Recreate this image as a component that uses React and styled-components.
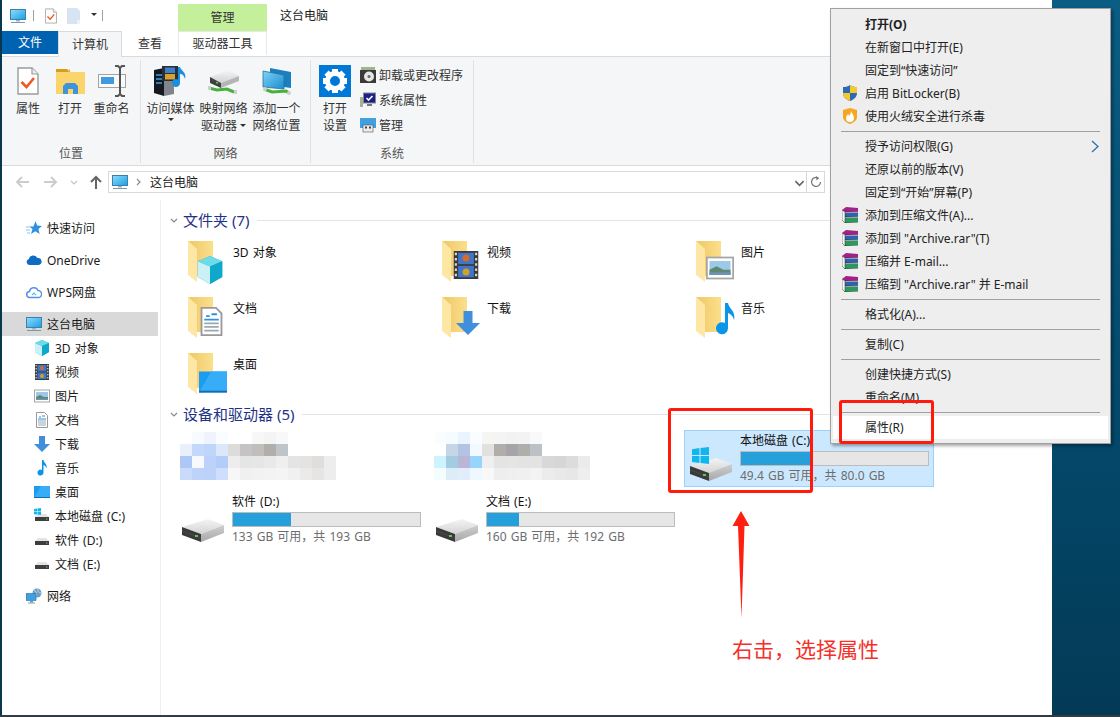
import React from 'react';
import styled, { createGlobalStyle } from 'styled-components';

const GlobalStyle = createGlobalStyle`
  html, body {
    margin: 0;
    padding: 0;
    overflow: hidden;
    background: #04405c;
  }
  * {
    box-sizing: border-box;
  }
`;

const Desktop = styled.div`
  position: relative;
  display: flex;
  flex-direction: column;
  width: 1120px;
  height: 717px;
  overflow: hidden;
  font-family: "Noto Sans", "Noto Sans CJK SC", sans-serif;
  font-size: 12px;
  word-spacing: 1px;
  color: #111;
  background: linear-gradient(180deg, #0b5d84 0%, #04486a 60%, #033a56 100%);
`;

const Workspace = styled.div`
  flex: 1;
  min-height: 0;
  padding-left: 2px;
  background: linear-gradient(90deg, #07384e 2px, transparent 2px);
`;

const Taskbar = styled.div`
  height: 2px;
  background: #333c42;
`;

const Window = styled.div`
  display: flex;
  flex-direction: column;
  width: 1050px;
  height: 100%;
  background: #fff;
`;

const TitleBar = styled.div`
  display: flex;
  align-items: flex-end;
  height: 31px;
`;

const QuickAccess = styled.div`
  display: flex;
  align-items: center;
  width: 176px;
  height: 31px;
  padding-left: 8px;
`;

const QatSep = styled.span`
  width: 1px;
  height: 11px;
  margin: 0 ${(p) => p.$right || 0}px 0 ${(p) => p.$left || 0}px;
  background: #a0a0a0;
`;

const QatGap = styled.span`
  width: ${(p) => p.$width}px;
`;

const ContextTab = styled.div`
  display: flex;
  align-items: center;
  justify-content: center;
  width: 89px;
  height: 27px;
  padding-bottom: 1px;
  background: #c4f09c;
  color: #333;
`;

const WindowTitle = styled.div`
  align-self: center;
  margin: -1px 0 0 13px;
  color: #1a1a1a;
`;

const TabRow = styled.div`
  display: flex;
  height: 26px;
  border-bottom: 1px solid #dadbdc;
`;

const FileTab = styled.div`
  display: flex;
  align-items: center;
  justify-content: center;
  width: 56px;
  height: 23px;
  padding-bottom: 1px;
  background: #0063b1;
  color: #fff;
`;

const Tab = styled.div`
  display: flex;
  align-items: center;
  justify-content: center;
  width: ${(p) => p.$width}px;
  height: ${(p) => (p.$active ? 27 : 24)}px;
  margin-bottom: ${(p) => (p.$active ? -1 : 0)}px;
  padding-bottom: ${(p) => (p.$active ? 3 : 1)}px;
  background: ${(p) => (p.$active ? '#f5f6f7' : '#fff')};
  color: #333;
  border-style: solid;
  border-color: #dadbdc;
  border-width: ${(p) => (p.$active ? '1px 1px 0' : 0)};
  ${(p) => p.$context && 'border-width: 1px 1px 0; border-color: #e8e8e8;'}
`;

const Ribbon = styled.div`
  display: flex;
  flex: none;
  height: 109px;
  padding: 3px 0 2px;
  background: #f5f6f7;
  border-bottom: 1px solid #dadbdc;
`;

const RibbonGroup = styled.div`
  display: flex;
  flex-direction: column;
  width: ${(p) => p.$width}px;
  border-right: 1px solid #e1e2e3;
`;

const GroupBody = styled.div`
  flex: 1;
  display: flex;
  padding-left: ${(p) => p.$pad || 0}px;
`;

const GroupLabel = styled.div`
  height: 18px;
  line-height: 18px;
  text-align: center;
  color: #555;
`;

const RibbonButton = styled.div`
  display: flex;
  flex-direction: column;
  align-items: center;
  width: ${(p) => p.$width}px;
  padding-top: 4px;
  color: #333;
  text-align: center;
  line-height: 17px;
  white-space: nowrap;
`;

const ButtonIcon = styled.div`
  display: flex;
  align-items: center;
  justify-content: center;
  height: 34px;
  margin-bottom: 2px;
`;

const Caret = styled.span`
  display: inline-block;
  width: 0;
  height: 0;
  margin: ${(p) => (p.$block ? '1px 0 0' : '0 0 2px 3px')};
  vertical-align: middle;
  border-left: 3px solid transparent;
  border-right: 3px solid transparent;
  border-top: 3px solid #333;
`;

const SmallColumn = styled.div`
  display: flex;
  flex-direction: column;
  gap: 3px;
  padding: 4px 0 0 1px;
`;

const SmallButton = styled.div`
  display: flex;
  align-items: center;
  gap: 3px;
  height: 22px;
  color: #333;
`;

const AddressRow = styled.div`
  display: flex;
  align-items: center;
  flex: none;
  height: 34px;
  padding-bottom: 2px;
`;

const NavIcon = styled.span`
  display: flex;
  align-items: center;
  justify-content: center;
  width: ${(p) => p.$width}px;
`;

const AddressBox = styled.div`
  display: flex;
  align-items: center;
  width: 717px;
  height: 22px;
  margin-left: 4px;
  padding-left: 3px;
  border: 1px solid #d9d9d9;
  color: #1a1a1a;
`;

const Crumb = styled.span`
  flex: 1;
  margin-left: 2px;
`;

const RefreshCell = styled.span`
  display: flex;
  align-items: center;
  justify-content: center;
  width: 18px;
  height: 100%;
  border-left: 1px solid #d9d9d9;
`;

const Main = styled.div`
  flex: 1;
  display: flex;
  min-height: 0;
`;

const Sidebar = styled.nav`
  display: flex;
  flex-direction: column;
  gap: 8px;
  width: 159px;
  padding: 16px 2px 0 0;
  border-right: 1px solid #efefef;
`;

const NavGroup = styled.div`
  display: flex;
  flex-direction: column;
`;

const NavItem = styled.div`
  display: flex;
  align-items: center;
  gap: 5px;
  height: 24px;
  padding-left: ${(p) => (p.$child ? 32 : 24)}px;
  background: ${(p) => (p.$selected ? '#d9d9d9' : 'transparent')};
  color: #1a1a1a;
`;

const Content = styled.div`
  flex: 1;
  display: flex;
  flex-direction: column;
  gap: 2px;
  padding: 8px 0 0 9px;
`;

const Section = styled.section`
  display: flex;
  flex-direction: column;
  gap: 4px;
`;

const SectionHeader = styled.div`
  display: flex;
  align-items: center;
  gap: 5px;
  height: 24px;
  color: #1e3287;
  font-size: 15px;
  word-spacing: 0;
`;

const SectionTitle = styled.span`
  margin-top: -2px;
`;

const SectionRule = styled.span`
  flex: 1;
  height: 1px;
  margin-left: 3px;
  background: #e4e4e4;
`;

const TileGrid = styled.div`
  display: grid;
  grid-template-columns: repeat(3, 250px);
  gap: 4px;
  margin-left: 6px;
`;

const FolderTile = styled.div`
  display: flex;
  height: 52px;
  padding: 5px 0 0 12px;
  color: #111;
`;

const TileName = styled.div`
  margin: 3px 0 0 7px;
  line-height: 17px;
`;

const FolderFrame = styled.div`
  position: relative;
  width: 38px;
  height: 42px;
  flex: none;
`;

const FolderBadge = styled.div`
  position: absolute;
  right: ${(p) => p.$right ?? 0}px;
  bottom: ${(p) => p.$bottom ?? 0}px;
  display: flex;
`;

const DriveTile = styled.div`
  display: flex;
  height: 57px;
  padding: 1px 0 0 5px;
  background: ${(p) => (p.$selected ? '#cce8ff' : 'transparent')};
  border: 1px solid ${(p) => (p.$selected ? '#99d1ff' : 'transparent')};
`;

const DriveIconBox = styled.div`
  position: relative;
  width: 50px;
  height: 100%;
  flex: none;
`;

const DriveArt = styled.div`
  position: absolute;
  left: 0;
  top: 26px;
  display: flex;
`;

const WinBadge = styled.div`
  position: absolute;
  left: 2px;
  top: 15px;
  display: flex;
`;

const DriveInfo = styled.div`
  display: flex;
  flex-direction: column;
  width: 189px;
`;

const DriveName = styled.div`
  height: 18px;
  line-height: 18px;
  color: #111;
`;

const Bar = styled.div`
  height: 15px;
  margin-top: 1px;
  background: #e6e6e6;
  border: 1px solid #bcbcbc;
`;

const BarFill = styled.div`
  height: 100%;
  background: #26a0da;
`;

const DriveFree = styled.div`
  margin-top: 1px;
  line-height: 18px;
  color: #6d6d6d;
`;

const MosaicTile = styled.div`
  height: 57px;
  display: flex;
  align-items: flex-start;
  padding: 2px 0 0 4px;
`;

const SmallDriveFrame = styled.span`
  position: relative;
  display: flex;
`;

const SmallWin = styled.span`
  position: absolute;
  left: 0;
  top: 0;
  display: flex;
`;

const Menu = styled.div`
  position: absolute;
  left: 830px;
  top: 8px;
  width: 281px;
  padding: 4px 2px;
  background: #eeeeee;
  border: 1px solid #a0a0a0;
  box-shadow: 2px 2px 3px rgba(0, 0, 0, 0.35);
  color: #222;
  word-spacing: 0;
`;

const MenuItem = styled.div`
  position: relative;
  display: flex;
  align-items: center;
  height: 23px;
  padding: 0 0 2px 32px;
  background: ${(p) => (p.$hover ? '#fff' : 'transparent')};
  font-weight: ${(p) => (p.$bold ? 700 : 400)};
  white-space: pre;
`;

const MenuIcon = styled.span`
  position: absolute;
  left: 9px;
  top: 3px;
  display: flex;
`;

const MenuArrow = styled.span`
  position: absolute;
  right: 9px;
  top: 5px;
  display: flex;
`;

const MenuSep = styled.div`
  height: 1px;
  margin: 3px 8px;
  background: #a0a0a0;
`;

const RedBox = styled.div`
  position: absolute;
  left: ${(p) => p.$x}px;
  top: ${(p) => p.$y}px;
  width: ${(p) => p.$w}px;
  height: ${(p) => p.$h}px;
  border: 3px solid #ff1a0c;
  border-radius: 3px;
`;

const ArrowMark = styled.svg`
  position: absolute;
  left: 730px;
  top: 510px;
`;

const Caption = styled.div`
  position: absolute;
  left: 732px;
  top: 633px;
  font-family: "Noto Sans CJK SC", sans-serif;
  font-size: 21px;
  line-height: 30px;
  color: #f5302a;
`;

// drawings

const MonitorIcon = ({ size = 16 }) => (
  <svg width={size} height={size} viewBox="0 0 16 16">
    <defs>
      <linearGradient id="scr" x1="0" y1="0" x2="1" y2="1">
        <stop offset="0" stopColor="#8fdcfb" />
        <stop offset="1" stopColor="#1a9fe8" />
      </linearGradient>
    </defs>
    <rect x="0.5" y="1.5" width="15" height="10" fill="url(#scr)" stroke="#3f7fa8" />
    <rect x="6" y="12" width="4" height="1.5" fill="#9ab4c4" />
    <rect x="1" y="14" width="14" height="1" fill="#7c99ab" />
  </svg>
);

const CheckDoc = ({ width = 12, height = 16 }) => (
  <svg width={width} height={height} viewBox="0 0 22 28">
    <path d="M1 1h14l6 6v20H1z" fill="#fff" stroke="#9a9a9a" strokeWidth="1.4" />
    <path d="M15 1v6h6" fill="#eee" stroke="#9a9a9a" strokeWidth="1.2" />
    <path d="M4.5 15l5 5L17 11" fill="none" stroke="#ef5a24" strokeWidth="2.6" />
  </svg>
);

const BlankDoc = () => (
  <svg width="13" height="16" viewBox="0 0 13 16">
    <path d="M0 0h10l3 3v13H0z" fill="#d8e4f4" />
    <path d="M10 12h3v4h-3z" fill="#eef3fa" />
  </svg>
);

const OpenFolder = () => (
  <svg width="29" height="25" viewBox="0 0 29 25">
    <path d="M0 0h11l3 3H0z" fill="#d69c1e" />
    <path d="M0 3h29v22H0z" fill="#fbd56b" />
    <path d="M0 3h11l3-3v3z" fill="#e8ab2e" />
    <path d="M7 25v-8l3-3h9l3 3v8h-5v-5h-5v5z" fill="#3f93dc" />
  </svg>
);

const RenameIcon = () => (
  <svg width="28" height="32" viewBox="0 0 28 32">
    <rect x="0.5" y="9.500" width="27" height="13" fill="#fafafa" stroke="#a3a3a3" />
    <rect x="3" y="12" width="13" height="7" fill="#3f9ae0" />
    <path d="M17 1h3l2 2 2-2h3M22 3v26M17 31h3l2-2 2 2h3" fill="none" stroke="#555" strokeWidth="2" />
  </svg>
);

const MediaIcon = () => (
  <svg width="33" height="30" viewBox="0 0 33 30">
    <path d="M0 4l10-2v28L0 27z" fill="#14181f" />
    <path d="M10 2l10 3v23l-10 2z" fill="#80858c" />
    <path d="M2 9h6M2 13h6M2 17h6" stroke="#3aa0e8" strokeWidth="1.5" />
    <rect x="8" y="0" width="16" height="15" fill="#2a2f38" />
    <rect x="11" y="1.500" width="10" height="5.500" fill="#3d80c8" />
    <rect x="11" y="8" width="10" height="5.500" fill="#d8a030" />
    <path d="M26 1v16a4 4 0 1 1-2-3.400V1zM26 1c1 4 7 5 5 12-1-4-3-5-5-5z" fill="#1a8fe0" />
  </svg>
);

const NetDrive = () => (
  <svg width="32" height="26" viewBox="0 0 32 26">
    <defs>
      <linearGradient id="ndt" x1="0" y1="0" x2="0" y2="1">
        <stop offset="0" stopColor="#f6f6f6" />
        <stop offset="1" stopColor="#d2d2d2" />
      </linearGradient>
    </defs>
    <path d="M2 9L21 2l10 6-18 7z" fill="url(#ndt)" />
    <path d="M13 15l18-7v5l-18 7z" fill="#b5b5b5" />
    <path d="M2 9l11 6v5L2 15z" fill="#404040" />
    <rect x="8" y="14" width="2" height="1.500" fill="#5ecb47" />
    <path d="M1 20l8 2 10-1 7 3" fill="none" stroke="#46b23c" strokeWidth="3" />
    <rect x="0" y="18" width="3" height="4" fill="#cfcfcf" />
    <rect x="26" y="22" width="3" height="4" fill="#cfcfcf" />
  </svg>
);

const NetLocation = () => (
  <svg width="30" height="28" viewBox="0 0 30 28">
    <defs>
      <linearGradient id="nl" x1="0" y1="0" x2="1" y2="1">
        <stop offset="0" stopColor="#7fd3f7" />
        <stop offset="1" stopColor="#1a8ccf" />
      </linearGradient>
    </defs>
    <path d="M8 1l21 4v16l-21-3z" fill="#1a7fbd" />
    <path d="M1 4l21 4v14L1 20z" fill="url(#nl)" stroke="#2a6f9c" strokeWidth="0.800" />
    <path d="M2 22l8 3 14-1 3 2" fill="none" stroke="#46b23c" strokeWidth="3" />
    <circle cx="3" cy="22" r="2" fill="#d0d0d0" />
    <circle cx="27" cy="26" r="2" fill="#d0d0d0" />
  </svg>
);

const GearIcon = () => (
  <svg width="32" height="32" viewBox="0 0 32 32">
    <rect width="32" height="32" fill="#0078d7" />
    <g fill="#fff">
      {[0, 45, 90, 135, 180, 225, 270, 315].map((a) => (
        <rect key={a} x="13" y="4" width="6" height="6" transform={`rotate(${a} 16 16)`} />
      ))}
    </g>
    <circle cx="16" cy="16" r="7.500" fill="none" stroke="#fff" strokeWidth="5" />
  </svg>
);

const UninstallIcon = () => (
  <svg width="16" height="16" viewBox="0 0 16 16">
    <rect x="1" y="0" width="14" height="4" fill="#9fb58c" />
    <rect x="0" y="3" width="16" height="13" fill="#3a3a3a" />
    <circle cx="9" cy="9.500" r="5" fill="#e6e6e6" />
    <circle cx="9" cy="9.500" r="1.500" fill="#666" />
  </svg>
);

const SysPropsIcon = () => (
  <svg width="16" height="16" viewBox="0 0 16 16">
    <rect x="0" y="5" width="3" height="10" fill="#a8b09a" />
    <rect x="3.500" y="1" width="12" height="10" fill="#1c1e8c" stroke="#888" />
    <path d="M6.500 6l2 2 4-4" fill="none" stroke="#fff" strokeWidth="1.600" />
    <rect x="7" y="12" width="5" height="2" fill="#777" />
  </svg>
);

const ManageIcon = () => (
  <svg width="16" height="16" viewBox="0 0 16 16">
    <rect x="0" y="1" width="16" height="10" fill="#3f9fe0" />
    <rect x="3" y="8" width="10" height="7" fill="#ececec" stroke="#555" strokeWidth="0.600" />
    <rect x="5" y="9.500" width="2" height="2" fill="#444" />
    <rect x="9" y="9.500" width="2" height="2" fill="#444" />
  </svg>
);

const Chevron = ({ dir = 'right', color = '#8a8a8a', size = 8 }) => {
  const d = dir === 'down' ? 'M1 3l3 3 3-3' : 'M3 1l3 3-3 3';
  return (
    <svg width={size} height={size} viewBox="0 0 8 8">
      <path d={d} fill="none" stroke={color} strokeWidth="1.200" />
    </svg>
  );
};

const NavArrow = ({ left, up, color }) => {
  const d = up ? 'M8 15V3M3 8l5-5 5 5' : left ? 'M15 8H3M8 3L3 8l5 5' : 'M1 8h12M8 3l5 5-5 5';
  return (
    <svg width="16" height="16" viewBox="0 0 16 16">
      <path d={d} fill="none" stroke={color} strokeWidth="2" />
    </svg>
  );
};

const RefreshIcon = () => (
  <svg width="12" height="12" viewBox="0 0 12 12">
    <path d="M8.500 2.200A4.500 4.500 0 1 0 10.500 6" fill="none" stroke="#777" strokeWidth="1.300" />
    <path d="M6 0l3 2.200L6.500 4.500z" fill="#777" />
  </svg>
);

const StarIcon = () => (
  <svg width="16" height="16" viewBox="0 0 16 16">
    <path d="M9.500 1l1.600 4.400L16 6l-3.600 3 1.200 5-4.300-2.800L5 14l1.500-5L3 6.500h4.500z" fill="#2f8fe0" />
    <path d="M0 7h3M0 10h4M1 13h3" stroke="#8cc4ee" strokeWidth="1" />
  </svg>
);

const CloudSolid = () => (
  <svg width="16" height="16" viewBox="0 0 16 16">
    <path d="M3.500 13a3 3 0 0 1-.6-5.900A4.500 4.500 0 0 1 11.400 6a3.500 3.500 0 0 1 1.200 7z" fill="#0f6cc4" />
  </svg>
);

const CloudLine = () => (
  <svg width="16" height="16" viewBox="0 0 16 16">
    <path d="M4 13.500a3 3 0 0 1-.5-6A4.400 4.400 0 0 1 12 6.600a3.400 3.400 0 0 1 .3 6.900z" fill="none" stroke="#4f8ff0" strokeWidth="1.500" />
    <path d="M6 11l2-2 2 2" fill="none" stroke="#6fb6e8" strokeWidth="1.200" />
  </svg>
);

const NetworkIcon = () => (
  <svg width="16" height="16" viewBox="0 0 16 16">
    <circle cx="11" cy="5" r="4.500" fill="#6a9cc4" />
    <path d="M8 2c2 1 3 3 2 6M12 1c-1 2 1 4 3 4" fill="none" stroke="#dbe8f2" strokeWidth="0.800" />
    <rect x="0" y="5.500" width="10" height="7" fill="#3f9fe0" stroke="#2a6f9c" strokeWidth="0.600" />
    <rect x="4" y="13" width="3" height="1.500" fill="#7c99ab" />
    <rect x="2" y="14.500" width="7" height="1" fill="#7c99ab" />
  </svg>
);

const CubeIcon = ({ size = 16 }) => (
  <svg width={size} height={size} viewBox="0 0 16 16">
    <path d="M8 0l7 3v9l-7 4-7-4V3z" fill="#12b3d6" />
    <path d="M1 3l7 3v10l-7-4z" fill="#c9f1f6" />
    <path d="M8 0l7 3-7 3-7-3z" fill="#6fdbe8" />
    <path d="M8 6l7-3v9l-7 4z" fill="#0fa8ca" />
  </svg>
);

const FilmIcon = ({ size = 16 }) => (
  <svg width={size} height={size} viewBox="0 0 16 16">
    <rect x="1" y="0" width="14" height="16" fill="#3a3a3a" />
    <rect x="3.500" y="1" width="9" height="6.500" fill="#3f76c9" />
    <rect x="3.500" y="8.500" width="9" height="6.500" fill="#3f76c9" />
    <circle cx="8" cy="4" r="2" fill="#d66a2a" />
    <circle cx="8" cy="12" r="2" fill="#d0a02a" />
    {[1, 4, 7, 10, 13].map((y) => (
      <g key={y}>
        <rect x="1.600" y={y} width="1.200" height="1.400" fill="#ddd" />
        <rect x="13.200" y={y} width="1.200" height="1.400" fill="#ddd" />
      </g>
    ))}
  </svg>
);

const PictureIcon = ({ size = 16 }) => (
  <svg width={size} height={size} viewBox="0 0 16 16">
    <rect x="0.500" y="2" width="15" height="12" fill="#fff" stroke="#a5a5a5" />
    <rect x="2" y="4" width="12" height="8" fill="#9cc8ea" />
    <path d="M2 9l4-2 4 2 4 0v3H2z" fill="#5e8870" />
    <rect x="2" y="10.500" width="12" height="1.500" fill="#6f93b4" />
  </svg>
);

const DocIcon = ({ size = 16 }) => (
  <svg width={size} height={size} viewBox="0 0 16 16">
    <path d="M2.500 0.500h8l3 3v12h-11z" fill="#fff" stroke="#999" />
    <path d="M5 5h2M8 4h3M4 7h8" stroke="#2f8fe0" strokeWidth="1" />
    <path d="M4 9h8M4 11h8M4 13h8" stroke="#9aa8b0" strokeWidth="1" />
  </svg>
);

const DownArrow = ({ size = 16 }) => (
  <svg width={size} height={size} viewBox="0 0 16 16">
    <path d="M5 0h6v8h5l-8 8-8-8h5z" fill="#3f8fdc" />
  </svg>
);

const NoteIcon = ({ size = 16 }) => (
  <svg width={size} height={size} viewBox="0 0 16 16">
    <path d="M8 0h1.500c.5 3 4 4 3 8.500-.5-2-1.500-3-3-3.500v7.500A3 3 0 1 1 8 10z" fill="#0a96e6" />
  </svg>
);

const ScreenIcon = ({ size = 16 }) => (
  <svg width={size} height={size} viewBox="0 0 16 16">
    <rect x="0" y="2" width="16" height="12" fill="#1a9cf2" />
    <path d="M0 14l7-12h9v11z" fill="#37adf8" />
    <rect x="0" y="13" width="16" height="1" fill="#0f6db0" />
  </svg>
);

const FolderArt = () => (
  <svg width="26" height="41" viewBox="0 0 26 41">
    <defs>
      <linearGradient id="fb" x1="0" y1="0" x2="1" y2="0">
        <stop offset="0" stopColor="#efc766" />
        <stop offset="1" stopColor="#fbdf8b" />
      </linearGradient>
    </defs>
    <path d="M0 0h25v35H8V8z" fill="url(#fb)" />
    <path d="M0 0l9 8v33l-9-7z" fill="#fee7a4" />
  </svg>
);

const WinLogo = ({ size = 6 }) => (
  <svg width={size} height={size} viewBox="0 0 16 16">
    <path d="M0 2l7-1v6.500H0zM8 1l8-1v7.500H8zM0 8.500h7V15l-7-1zM8 8.500h8V16l-8-1z" fill="#12b6ee" />
  </svg>
);

const DriveSmall = ({ system }) => (
  <SmallDriveFrame>
    <svg width="16" height="16" viewBox="0 0 16 16">
      <path d="M1 9l3-3h8l3 3z" fill="#e4e4e4" />
      <rect x="1" y="9" width="14" height="4" fill="#3e3e3e" />
      <rect x="12" y="10.500" width="1.500" height="1" fill="#5ecb47" />
    </svg>
    {system && (
      <SmallWin>
        <WinLogo size={7} />
      </SmallWin>
    )}
  </SmallDriveFrame>
);

const DriveBig = () => (
  <svg width="43" height="24" viewBox="0 0 43 24">
    <defs>
      <linearGradient id="dt" x1="0" y1="0" x2="0" y2="1">
        <stop offset="0" stopColor="#f4f4f4" />
        <stop offset="1" stopColor="#d4d4d4" />
      </linearGradient>
      <linearGradient id="ds" x1="0" y1="0" x2="0" y2="1">
        <stop offset="0" stopColor="#cfcfcf" />
        <stop offset="1" stopColor="#a8a8a8" />
      </linearGradient>
    </defs>
    <path d="M0 8L26 0l16 6-23 9z" fill="url(#dt)" />
    <path d="M19 15l23-9v8l-23 9z" fill="url(#ds)" />
    <path d="M0 8l19 7v8L0 16z" fill="#3a3a3a" />
    <path d="M0 12l19 7" stroke="#555" strokeWidth="0.600" />
    <rect x="13" y="16" width="3" height="2" fill="#5ecb47" />
  </svg>
);

const RarIcon = () => (
  <svg width="16" height="16" viewBox="0 0 16 16">
    <path d="M0 3l4-3 12 1v3.500L3 5z" fill="#a3208a" />
    <path d="M1 7l2-1h13v3.500L3 10z" fill="#2a62b8" />
    <path d="M1 12l2-1h13v4L3 16z" fill="#2a9a5c" />
    <path d="M0 3l3 2v11l-3-3z" fill="#f4f4f4" stroke="#333" strokeWidth="0.500" />
    <path d="M3 5h13M3 10h13M3 16h13" stroke="#111" strokeWidth="0.700" />
  </svg>
);

const UacShield = () => (
  <svg width="16" height="16" viewBox="0 0 16 16">
    <path d="M8 0c2 1.500 4 2 7 2v6c0 4-3 6.500-7 8-4-1.500-7-4-7-8V2c3 0 5-.5 7-2z" fill="#2d6ab5" />
    <path d="M8 0c2 1.500 4 2 7 2v6H8zM8 8H1c0 4 3 6.500 7 8z" fill="#f5c92e" />
  </svg>
);

const FireShield = () => (
  <svg width="16" height="16" viewBox="0 0 16 16">
    <path d="M8 0l7 2v7c0 3-3 5.500-7 7-4-1.500-7-4-7-7V2z" fill="#f6a623" />
    <path d="M9 3c1 3 3 4 3 7a4 4 0 0 1-8 0c0-2 1.500-2.500 2-4 1 1 1 1.500 1.500 2C8 6.500 9 5 9 3z" fill="#fff" />
  </svg>
);

const mosaicA = [
  ['#fff', '#f7faff', '#eef3fe', '#fbfcff', '#fff', '#fff', '#f7f7f7', '#f3f4f3', '#f8f8f8', '#fff', '#fff', '#fff', '#fff'],
  ['#e8effd', '#c4d8fb', '#c0d5fa', '#dce7fc', '#dddcd9', '#c4c4c6', '#c2bebc', '#b0afab', '#bfc4c8', '#fff', '#fff', '#fff', '#fff'],
  ['#adc7f7', '#f6faff', '#bcd2fa', '#b4ccf8', '#eeeded', '#e4e5e5', '#e7e6e6', '#e9e9e9', '#efefef', '#e3e4e6', '#e5e3e1', '#dfdedd', '#eceded'],
  ['#c9dafb', '#bdd3fa', '#bcd2f9', '#cfdefc', '#f7f7f7', '#f0f0f0', '#f2f2f2', '#f3f3f3', '#f4f4f4', '#f0f0f0', '#ebeae8', '#e5e5e3', '#ededed'],
];

const mosaicB = [
  ['#fafdfe', '#f5fbfe', '#eaf4ff', '#f9fdff', '#f5f5f3', '#f3f4f3', '#f1f2f1', '#f3f3f3', '#f9f9f9', '#fff', '#fff', '#fff', '#fff'],
  ['#fff', '#c5d7e6', '#b2c4e2', '#f2f9ff', '#e2e1de', '#b0adab', '#a5a5a7', '#afaeaa', '#bcc1c6', '#fff', '#fff', '#fff', '#fff'],
  ['#cdf3ff', '#a3cbe2', '#bbb6d6', '#97d5ff', '#efefef', '#e4e4e4', '#e5e5e5', '#e3e3e3', '#e3e3e1', '#d8d8d8', '#d6d6d6', '#dcdcdc', '#ebebeb'],
  ['#f5fcfe', '#dcedf7', '#dfeefa', '#eff8ff', '#f8f8f8', '#eeeeee', '#efefef', '#f0f0f0', '#f3f3f3', '#ececec', '#e9e9e9', '#e7e7e7', '#eeeeee'],
];

const Mosaic = ({ cells }) => (
  <svg width="156" height="48" viewBox="0 0 156 48" shapeRendering="crispEdges">
    {cells.map((row, r) =>
      row.map((c, i) => <rect key={`${r}-${i}`} x={i * 12} y={r * 12} width="12" height="12" fill={c} />)
    )}
  </svg>
);

const folders = [
  { name: '3D 对象', Badge: CubeIcon, size: 28, right: 2, bottom: -1 },
  { name: '视频', Badge: FilmIcon, size: 28, right: 0, bottom: 4 },
  { name: '图片', Badge: PictureIcon, size: 28, right: 0, bottom: 1 },
  { name: '文档', Badge: DocIcon, size: 29, right: 0, bottom: 3 },
  { name: '下载', Badge: DownArrow, size: 24, right: 0, bottom: 4 },
  { name: '音乐', Badge: NoteIcon, size: 32, right: -7, bottom: 4 },
  { name: '桌面', Badge: ScreenIcon, size: 28, right: -1, bottom: -1 },
];

const FolderItem = ({ name, Badge, size, right, bottom }) => (
  <FolderTile>
    <FolderFrame>
      <FolderArt />
      <FolderBadge $right={right} $bottom={bottom}>
        <Badge size={size} />
      </FolderBadge>
    </FolderFrame>
    <TileName>{name}</TileName>
  </FolderTile>
);

const Drive = ({ name, free, percent, selected }) => (
  <DriveTile $selected={selected}>
    <DriveIconBox>
      <DriveArt>
        <DriveBig />
      </DriveArt>
      {selected && (
        <WinBadge>
          <WinLogo size={17} />
        </WinBadge>
      )}
    </DriveIconBox>
    <DriveInfo>
      <DriveName>{name}</DriveName>
      <Bar>
        <BarFill style={{ width: `${percent}%` }} />
      </Bar>
      <DriveFree>{free}</DriveFree>
    </DriveInfo>
  </DriveTile>
);

const menuTop = [
  { label: '打开(O)', bold: true },
  { label: '在新窗口中打开(E)' },
  { label: '固定到“快速访问”' },
  { label: '启用 BitLocker(B)', icon: <UacShield /> },
  { label: '使用火绒安全进行杀毒', icon: <FireShield /> },
];

const menuMiddle = [
  { label: '授予访问权限(G)', sub: true },
  { label: '还原以前的版本(V)' },
  { label: '固定到“开始”屏幕(P)' },
  { label: '添加到压缩文件(A)...', icon: <RarIcon /> },
  { label: '添加到 "Archive.rar"(T)', icon: <RarIcon /> },
  { label: '压缩并 E-mail...', icon: <RarIcon /> },
  { label: '压缩到 "Archive.rar" 并 E-mail', icon: <RarIcon /> },
];

const MenuRow = ({ label, bold, icon, sub, hover }) => (
  <MenuItem $bold={bold} $hover={hover}>
    {icon && <MenuIcon>{icon}</MenuIcon>}
    {label}
    {sub && (
      <MenuArrow>
        <svg width="8" height="13" viewBox="0 0 8 13">
          <path d="M1 1l6 5.500-6 5.500" fill="none" stroke="#2a6aa8" strokeWidth="1.200" />
        </svg>
      </MenuArrow>
    )}
  </MenuItem>
);

const App = () => (
  <Desktop>
    <GlobalStyle />
    <Workspace>
      <Window>
        <TitleBar>
          <QuickAccess>
            <MonitorIcon />
            <QatSep $left={7} $right={11} />
            <CheckDoc />
            <QatGap $width={10} />
            <BlankDoc />
            <QatGap $width={8} />
            <Caret />
            <QatSep $left={5} />
          </QuickAccess>
          <ContextTab>管理</ContextTab>
          <WindowTitle>这台电脑</WindowTitle>
        </TitleBar>
        <TabRow>
          <FileTab>文件</FileTab>
          <Tab $width={64} $active>计算机</Tab>
          <Tab $width={56}>查看</Tab>
          <Tab $width={89} $context>驱动器工具</Tab>
        </TabRow>
        <Ribbon>
          <RibbonGroup $width={139}>
            <GroupBody $pad={5}>
              <RibbonButton $width={42}>
                <ButtonIcon><CheckDoc width={22} height={28} /></ButtonIcon>
                属性
              </RibbonButton>
              <RibbonButton $width={42}>
                <ButtonIcon><OpenFolder /></ButtonIcon>
                打开
              </RibbonButton>
              <RibbonButton $width={41}>
                <ButtonIcon><RenameIcon /></ButtonIcon>
                重命名
              </RibbonButton>
            </GroupBody>
            <GroupLabel>位置</GroupLabel>
          </RibbonGroup>
          <RibbonGroup $width={170}>
            <GroupBody $pad={3}>
              <RibbonButton $width={53}>
                <ButtonIcon><MediaIcon /></ButtonIcon>
                访问媒体
                <Caret $block />
              </RibbonButton>
              <RibbonButton $width={53}>
                <ButtonIcon><NetDrive /></ButtonIcon>
                映射网络
                <span>驱动器<Caret /></span>
              </RibbonButton>
              <RibbonButton $width={53}>
                <ButtonIcon><NetLocation /></ButtonIcon>
                添加一个
                <span>网络位置</span>
              </RibbonButton>
            </GroupBody>
            <GroupLabel>网络</GroupLabel>
          </RibbonGroup>
          <RibbonGroup $width={163}>
            <GroupBody>
              <RibbonButton $width={48}>
                <ButtonIcon><GearIcon /></ButtonIcon>
                打开
                <span>设置</span>
              </RibbonButton>
              <SmallColumn>
                <SmallButton><UninstallIcon />卸载或更改程序</SmallButton>
                <SmallButton><SysPropsIcon />系统属性</SmallButton>
                <SmallButton><ManageIcon />管理</SmallButton>
              </SmallColumn>
            </GroupBody>
            <GroupLabel>系统</GroupLabel>
          </RibbonGroup>
        </Ribbon>
        <AddressRow>
          <NavIcon $width={39}><NavArrow left color="#cccccc" /></NavIcon>
          <NavIcon $width={19}><NavArrow color="#cccccc" /></NavIcon>
          <NavIcon $width={27}><Chevron dir="down" color="#c4c4c4" /></NavIcon>
          <NavIcon $width={17}><NavArrow up color="#666666" /></NavIcon>
          <AddressBox>
            <MonitorIcon />
            <NavIcon $width={20}><Chevron /></NavIcon>
            <Crumb>这台电脑</Crumb>
            <NavIcon $width={14}><Chevron dir="down" color="#666" size={11} /></NavIcon>
            <RefreshCell><RefreshIcon /></RefreshCell>
          </AddressBox>
        </AddressRow>
        <Main>
          <Sidebar>
            <NavGroup>
              <NavItem><StarIcon />快速访问</NavItem>
            </NavGroup>
            <NavGroup>
              <NavItem><CloudSolid />OneDrive</NavItem>
            </NavGroup>
            <NavGroup>
              <NavItem><CloudLine />WPS网盘</NavItem>
            </NavGroup>
            <NavGroup>
              <NavItem $selected><MonitorIcon />这台电脑</NavItem>
              <NavItem $child><CubeIcon />3D 对象</NavItem>
              <NavItem $child><FilmIcon />视频</NavItem>
              <NavItem $child><PictureIcon />图片</NavItem>
              <NavItem $child><DocIcon />文档</NavItem>
              <NavItem $child><DownArrow />下载</NavItem>
              <NavItem $child><NoteIcon />音乐</NavItem>
              <NavItem $child><ScreenIcon />桌面</NavItem>
              <NavItem $child><DriveSmall system />本地磁盘 (C:)</NavItem>
              <NavItem $child><DriveSmall />软件 (D:)</NavItem>
              <NavItem $child><DriveSmall />文档 (E:)</NavItem>
            </NavGroup>
            <NavGroup>
              <NavItem><NetworkIcon />网络</NavItem>
            </NavGroup>
          </Sidebar>
          <Content>
            <Section>
              <SectionHeader>
                <Chevron dir="down" color="#888" size={8} />
                <SectionTitle>文件夹 (7)</SectionTitle>
                <SectionRule />
              </SectionHeader>
              <TileGrid>
                {folders.map((f) => (
                  <FolderItem key={f.name} {...f} />
                ))}
              </TileGrid>
            </Section>
            <Section>
              <SectionHeader>
                <Chevron dir="down" color="#888" size={8} />
                <SectionTitle>设备和驱动器 (5)</SectionTitle>
                <SectionRule />
              </SectionHeader>
              <TileGrid>
                <MosaicTile><Mosaic cells={mosaicA} /></MosaicTile>
                <MosaicTile><Mosaic cells={mosaicB} /></MosaicTile>
                <Drive selected name="本地磁盘 (C:)" free="49.4 GB 可用，共 80.0 GB" percent={37} />
                <Drive name="软件 (D:)" free="133 GB 可用，共 193 GB" percent={31} />
                <Drive name="文档 (E:)" free="160 GB 可用，共 192 GB" percent={17} />
              </TileGrid>
            </Section>
          </Content>
        </Main>
      </Window>
    </Workspace>
    <Taskbar />
    <Menu>
      {menuTop.map((m) => <MenuRow key={m.label} {...m} />)}
      <MenuSep />
      {menuMiddle.map((m) => <MenuRow key={m.label} {...m} />)}
      <MenuSep />
      <MenuRow label="格式化(A)..." />
      <MenuSep />
      <MenuRow label="复制(C)" />
      <MenuSep />
      <MenuRow label="创建快捷方式(S)" />
      <MenuRow label="重命名(M)" />
      <MenuSep />
      <MenuRow label="属性(R)" hover />
    </Menu>
    <RedBox $x={668} $y={408} $w={145} $h={85} />
    <RedBox $x={839} $y={400} $w={95} $h={44} />
    <ArrowMark width="22" height="110" viewBox="0 0 22 110">
      <path d="M11 1l8.500 15H14.500L11.500 108 8 16H2.500z" fill="#ff1f10" />
    </ArrowMark>
    <Caption>右击，选择属性</Caption>
  </Desktop>
);

export default App;
